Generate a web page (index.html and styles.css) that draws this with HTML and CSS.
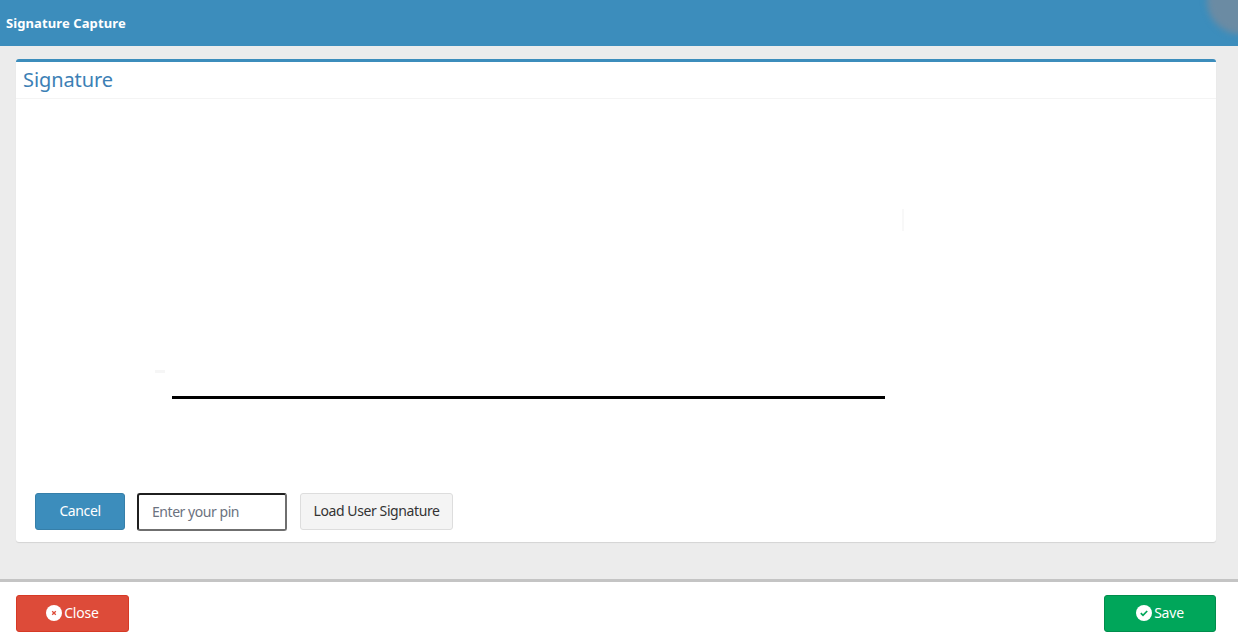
FILE: index.html
```html
<!DOCTYPE html>
<html lang="en">
<head>
<meta charset="utf-8">
<title>Signature Capture</title>
<link rel="stylesheet" href="styles.css">
</head>
<body>
<div class="app">
  <header class="topbar">
    <span class="topbar-title">Signature Capture</span>
    <span class="topbar-blob"></span>
  </header>
  <main class="content">
    <section class="card">
      <h2 class="card-title">Signature</h2>
      <div class="sign-area">
        <span class="mark mark-left"></span>
        <span class="mark mark-right"></span>
        <div class="sign-line"></div>
      </div>
      <div class="controls">
        <button class="btn btn-primary btn-cancel" type="button">Cancel</button>
        <input class="pin" type="text" placeholder="Enter your pin">
        <button class="btn btn-default" type="button">Load User Signature</button>
      </div>
    </section>
  </main>
  <footer class="footer">
    <button class="btn btn-danger btn-foot" type="button">
      <svg class="ico" viewBox="0 0 16 16" aria-hidden="true"><circle cx="8" cy="8" r="8" fill="#fff"/><path d="M6.200 6.200l3.600 3.600M9.800 6.200l-3.600 3.600" stroke="#dd4b39" stroke-width="1.300" fill="none"/></svg>Close
    </button>
    <button class="btn btn-success btn-foot" type="button">
      <svg class="ico" viewBox="0 0 16 16" aria-hidden="true"><circle cx="8" cy="8" r="8" fill="#fff"/><path d="M4.800 8.200l2.200 2.200 4.200-4.400" stroke="#00a65a" stroke-width="1.700" fill="none"/></svg>Save
    </button>
  </footer>
</div>
</body>
</html>
```
FILE: styles.css
```css
* { box-sizing: border-box; }
html, body { margin: 0; height: 100%; }
body {
  font-family: "Noto Sans", "Open Sans", sans-serif;
  font-size: 14px;
  color: #333;
  background: #fff;
  overflow: hidden;
}
.app { display: flex; flex-direction: column; height: 636px; }
.topbar {
  position: relative;
  flex: none;
  height: 46px;
  display: flex;
  align-items: center;
  padding-left: 6px;
  background: #3c8dbc;
  overflow: hidden;
}
.topbar-title {
  color: #fff;
  font-size: 13px;
  font-weight: 700;
  letter-spacing: 0.1px;
  padding-bottom: 1px;
}
.topbar-blob {
  position: absolute;
  left: 1207px;
  top: -32px;
  width: 66px;
  height: 66px;
  border-radius: 50%;
  background: #6b8ba3;
  filter: blur(3px);
}
.content {
  flex: 1;
  padding: 13px 22px 0 16px;
  background: #ececec;
}
.card {
  height: 483px;
  display: flex;
  flex-direction: column;
  background: #fff;
  border-top: 3px solid #3c8dbc;
  border-radius: 3px;
  box-shadow: 0 1px 1px rgba(0, 0, 0, 0.1);
}
.card-title {
  flex: none;
  height: 37px;
  margin: 0;
  padding-left: 7px;
  border-bottom: 1px solid #f4f4f4;
  color: #3c7fb5;
  font-size: 20px;
  font-weight: 400;
  line-height: 35px;
  letter-spacing: -0.1px;
}
.sign-area {
  position: relative;
  flex: 1;
  padding: 297px 0 0 156px;
}
.sign-line { width: 713px; height: 3px; background: #000; }
.mark { position: absolute; background: #f6f6f6; }
.mark-left { left: 139px; top: 271px; width: 10px; height: 3px; }
.mark-right { left: 886px; top: 110px; width: 2px; height: 22px; background: #f8f8f8; }
.controls {
  flex: none;
  display: flex;
  align-items: flex-start;
  padding: 0 0 11px 19px;
}
.btn {
  height: 37px;
  padding: 0 0 2px;
  border: 1px solid transparent;
  border-radius: 3px;
  font-family: inherit;
  font-size: 14px;
  letter-spacing: -0.4px;
  display: inline-flex;
  align-items: center;
  justify-content: center;
}
.btn-primary { background: #3c8dbc; border-color: #367fa9; color: #fff; }
.btn-default { width: 153px; background: #f4f4f4; border-color: #ddd; color: #333; }
.btn-danger { background: #dd4b39; border-color: #d73925; color: #fff; }
.btn-success { background: #00a65a; border-color: #008d4c; color: #fff; }
.btn-cancel { width: 90px; }
.pin {
  width: 150px;
  height: 38px;
  margin: 0 13px 0 12px;
  padding: 0 0 2px 13px;
  border: 2px solid;
  border-color: #1f1f1f #6f6f6f #6f6f6f #1f1f1f;
  border-radius: 3px;
  background: #fff;
  font-family: inherit;
  font-size: 14px;
  letter-spacing: -0.45px;
  color: #333;
  outline: none;
}
.pin::placeholder { color: #6b7280; opacity: 1; }
.footer {
  flex: none;
  height: 57px;
  display: flex;
  justify-content: space-between;
  padding: 13px 22px 0 16px;
  border-top: 3px solid #c4c4c4;
  background: #fff;
}
.btn-foot { width: 113px; letter-spacing: -0.2px; }
.btn-success.btn-foot { width: 112px; }
.ico { width: 16px; height: 16px; margin-right: 2px; flex: none; margin-top: 1px; }
```
